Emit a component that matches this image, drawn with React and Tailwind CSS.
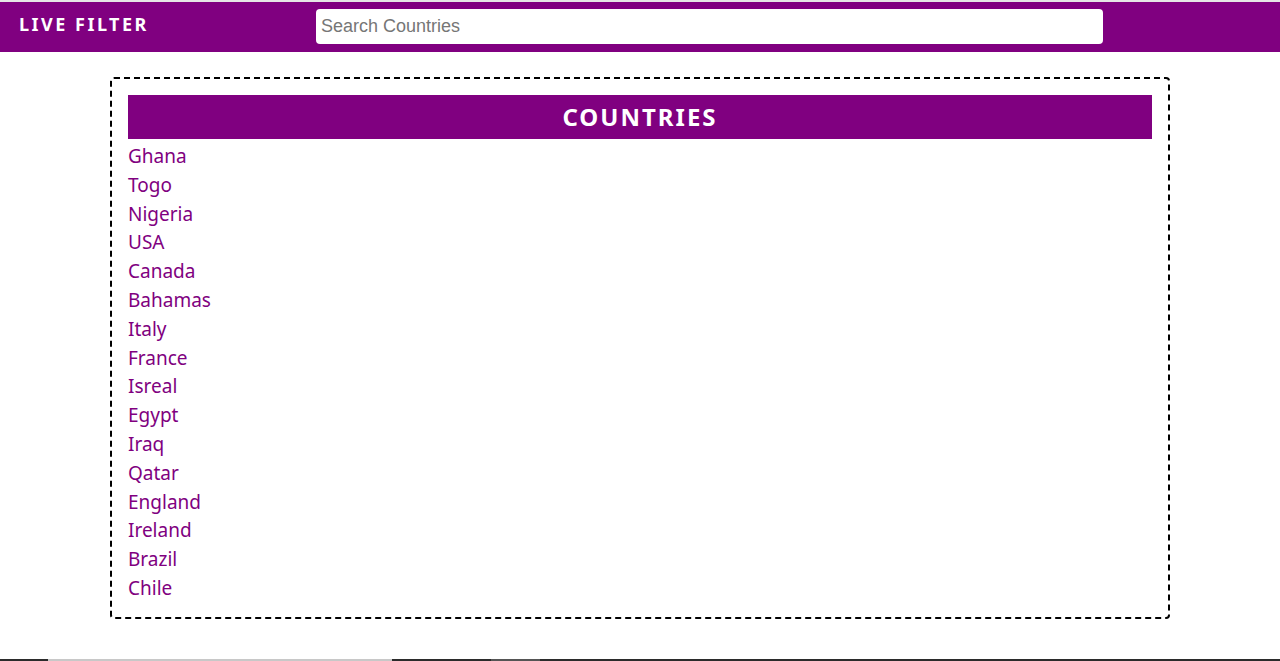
import React, { useState } from 'react';

const countries = [
  'Ghana', 'Togo', 'Nigeria', 'USA', 'Canada', 'Bahamas', 'Italy', 'France',
  'Isreal', 'Egypt', 'Iraq', 'Qatar', 'England', 'Ireland', 'Brazil', 'Chile',
];

const App = () => {
  const [query, setQuery] = useState('');

  const filtered = countries.filter((c) =>
    c.toLowerCase().includes(query.trim().toLowerCase())
  );

  return (
    <div className="min-h-[661px] flex flex-col bg-white font-['Noto_Sans',sans-serif]">
      {/* top bar */}
      <header className="border-t-2 border-[#e6e6e6] bg-[#800080] h-[52px] flex items-center">
        <h1 className="w-[316px] pl-[19px] text-white font-bold text-[18px] tracking-[2.5px] -mt-[6px]">
          LIVE FILTER
        </h1>
        <input
          type="text"
          value={query}
          onChange={(e) => setQuery(e.target.value)}
          placeholder="Search Countries"
          className="w-[787px] h-[35px] -mt-[2px] rounded-[4px] bg-white px-[5px] text-[18px] text-gray-800 placeholder:text-[#767676] outline-none font-['Liberation_Sans',Arial,sans-serif]"
        />
      </header>

      <main className="flex-1">
        <div className="mx-[110px] mt-[25px] border-2 border-dashed border-black rounded-[4px] p-[16px] pb-[14px]">
          <h2 className="bg-[#800080] h-[44px] flex items-center justify-center text-white font-bold text-[24px] tracking-[2px]">
            COUNTRIES
          </h2>
          <ul className="mt-[3px]">
            {filtered.map((c) => (
              <li key={c} className="text-[#800080] text-[19px] leading-[28.8px]">
                {c}
              </li>
            ))}
          </ul>
        </div>
      </main>

      {/* bottom scroll strip */}
      <div className="h-[2px] flex">
        <div className="w-[48px] bg-[#2b2b2b]" />
        <div className="w-[344px] bg-[#c8c8c8]" />
        <div className="w-[99px] bg-[#2b2b2b]" />
        <div className="w-[49px] bg-[#555555]" />
        <div className="flex-1 bg-[#2b2b2b]" />
      </div>
    </div>
  );
};

export default App;
